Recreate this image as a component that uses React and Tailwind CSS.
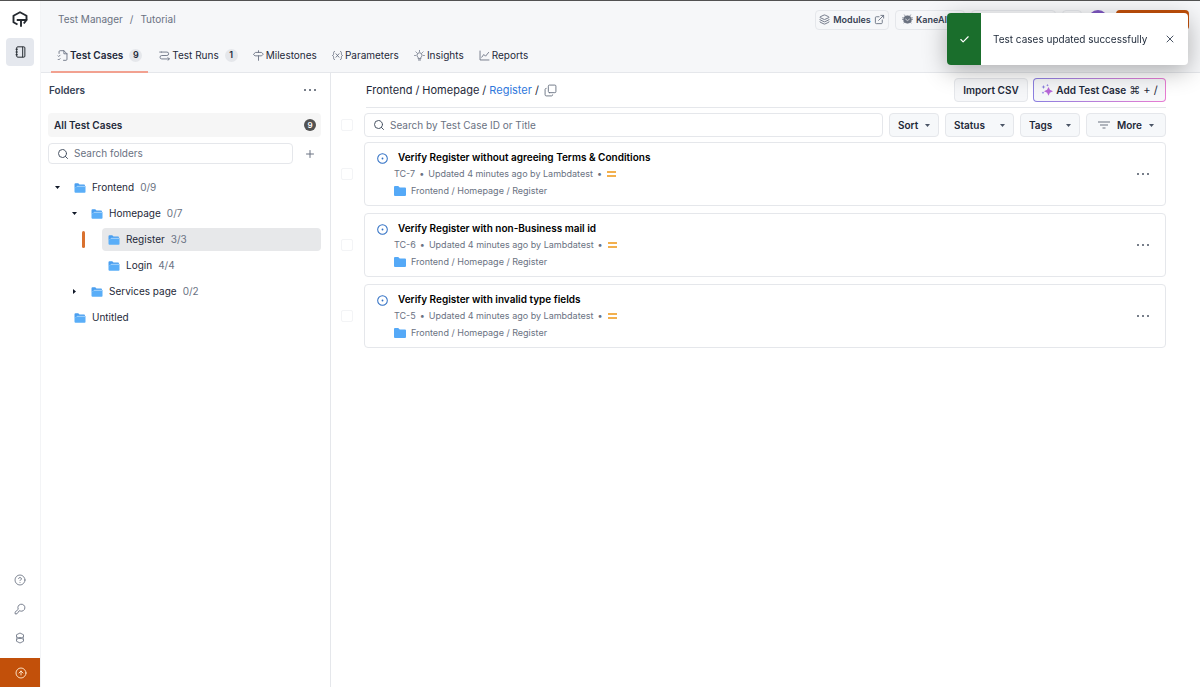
import React, { useState } from "react";
import { Search, Plus, X, Check, Copy, Layers, ExternalLink, CircleHelp, CircleArrowUp } from "lucide-react";

const tabs = [
    { name: "Test Cases", icon: "cases", count: 9 },
    { name: "Test Runs", icon: "runs", count: 1 },
    { name: "Milestones", icon: "milestones" },
    { name: "Parameters", icon: "parameters" },
    { name: "Insights", icon: "insights" },
    { name: "Reports", icon: "reports" },
];

const testCases = [
    { id: "TC-7", title: "Verify Register without agreeing Terms & Conditions" },
    { id: "TC-6", title: "Verify Register with non-Business mail id" },
    { id: "TC-5", title: "Verify Register with invalid type fields" },
];

const TabIcon = ({ name }) => (
    <svg
        viewBox="0 0 16 16"
        className="w-[11px] h-[11px] shrink-0 text-gray-500"
        fill="none"
        stroke="currentColor"
        strokeWidth="1.3"
        strokeLinecap="round"
        strokeLinejoin="round"
    >
        {name === "cases" && (
            <path d="M3 5V2.5A1.5 1.5 0 0 1 4.5 1H10l4.5 4.500V13.5A1.5 1.5 0 0 1 13 15H9.500M10 1v4.500h4.500M1.500 8.500l1 1 2-2M1.500 13.500l1 1 2-2" />
        )}
        {name === "runs" && (
            <path d="M3.500 3h8a2.500 2.500 0 0 1 0 5H4a2.500 2.500 0 0 0 0 5h11M1 3h2.500M13 11l2 2-2 2" />
        )}
        {name === "milestones" && (
            <path d="M8 1v2.500M8 8.500V15M1 6l2.500-2.500h9L15 6l-2.500 2.500h-9z" />
        )}
        {name === "parameters" && (
            <path d="M3.500 2C1.800 2 2.500 5 2.200 6.500 2 7.500 1 8 .8 8c.2 0 1.200.5 1.400 1.500C2.500 11 1.800 14 3.500 14M12.500 2c1.700 0 1 3 1.300 4.500.2 1 1.200 1.500 1.400 1.500-.2 0-1.200.5-1.400 1.500-.3 1.500.4 4.500-1.300 4.500M5.800 5.500l4.400 5M10.200 5.500l-4.400 5" />
        )}
        {name === "insights" && (
            <path d="M6 12v-1.500C4.800 9.800 4.300 8.800 4.300 7.700a3.700 3.700 0 0 1 7.400 0c0 1.100-.5 2.100-1.700 2.800V12zM6.500 14.500h3M8 .8v1.200M1 8h1M14 8h1M2.800 2.800l.8.8M13.200 2.800l-.8.8" />
        )}
        {name === "reports" && <path d="M1.500 1.500v13h13M4 10.500l3-4 2.500 2.500 4.500-5.500" />}
    </svg>
);

const OpenFolder = () => (
    <svg viewBox="0 0 24 20" className="w-3 h-[10px] shrink-0">
        <path d="M1 2.500A2 2 0 0 1 3 .5h5.500l2.500 2.500h9a2 2 0 0 1 2 2V7H5L3 9H1z" fill="#4a9ff0" />
        <path d="M4.500 6.200H23V18a1.600 1.600 0 0 1-1.600 1.600H3A2.200 2.200 0 0 1 1 17.500V8.500h3.500z" fill="#5aaef8" />
        <path d="M6 6.600h16" stroke="#fff" strokeWidth="1" />
    </svg>
);

const Caret = ({ className = "" }) => (
    <svg viewBox="0 0 10 6" className={`w-[5px] h-[3px] shrink-0 ${className}`}>
        <path d="M0 0h10L5 6z" fill="currentColor" />
    </svg>
);

const Dots = () => (
    <svg viewBox="0 0 12 2" className="w-3 h-[2px]" fill="#4b5563">
        <circle cx="1" cy="1" r="1" />
        <circle cx="6" cy="1" r="1" />
        <circle cx="11" cy="1" r="1" />
    </svg>
);

const Sidebar = () => (
    <aside className="w-[41px] shrink-0 border-r border-gray-100 bg-white flex flex-col items-center justify-between">
        <div className="w-10 flex flex-col items-center pt-[6px] gap-[7px]">
            <a href="#home" aria-label="Home" className="p-1">
                <svg
                    viewBox="0 0 32 32"
                    className="w-4 h-4"
                    fill="none"
                    stroke="#24292f"
                    strokeWidth="3.800"
                    strokeLinejoin="round"
                >
                    <path d="M11 27L3 22.500V9.500L16 2.500l13 7v9" />
                    <path d="M9.500 18H29l-5.500 7M18 18v13.500" />
                </svg>
            </a>
            <a
                href="#test-manager"
                aria-label="Test Manager"
                className="w-7 h-7 rounded bg-[#e5e8ee] flex items-center justify-center"
            >
                <svg viewBox="0 0 20 22" className="w-[11px] h-3" fill="none" stroke="#24292f" strokeWidth="1.800">
                    <rect x="3" y="1.500" width="15" height="19" rx="2" />
                    <path d="M14 1.500v19M1 6h4M1 11h4M1 16h4" />
                </svg>
            </a>
        </div>
        <div className="w-10 flex flex-col items-center text-gray-500">
            <div className="flex flex-col items-center gap-[17px] pb-[14px]">
                <button aria-label="Help">
                    <CircleHelp size={12} strokeWidth={1.7} />
                </button>
                <button aria-label="Access key">
                    <svg viewBox="0 0 24 24" className="w-3 h-3" fill="none" stroke="currentColor" strokeWidth="1.800">
                        <path d="M8.500 12.500A7 7 0 1 1 12.500 16L10.500 15.500 6 21.500l-3.500.5-.5-3.500z" />
                    </svg>
                </button>
                <button aria-label="Settings">
                    <svg viewBox="0 0 24 24" className="w-3 h-3" fill="none" stroke="currentColor" strokeWidth="1.700">
                        <path d="M12 2l7 3.500v5L17.500 12l1.500 1.500v5L12 22l-7-3.500v-5L6.500 12 5 10.500v-5z" />
                        <path d="M6 10l6 3.500 6-3.500M6 14.500l6-4 6 4" />
                    </svg>
                </button>
            </div>
            <button aria-label="Upgrade" className="w-10 h-[29px] pl-[2px] bg-[#c2500a] text-orange-100 flex items-center justify-center">
                <CircleArrowUp size={12} strokeWidth={1.8} />
            </button>
        </div>
    </aside>
);

const Header = () => (
    <header className="bg-[#f6f7f9] border-b border-gray-200">
        <div className="h-[37px] pl-[17px] pr-[11px] flex items-center justify-between">
            <nav className="flex gap-[7px] text-[10px] text-gray-500">
                <a href="#manager">Test Manager</a>
                <span>/</span>
                <a href="#tutorial">Tutorial</a>
            </nav>
            <div className="flex items-center text-[9px] font-semibold text-gray-700">
                <button className="h-5 w-[74px] mr-[6px] border border-gray-200 rounded flex items-center justify-center gap-[3px]">
                    <Layers size={11} className="text-gray-500" />
                    Modules
                    <ExternalLink size={11} className="text-gray-500" />
                </button>
                <button className="h-5 w-[70px] mr-[6px] pl-[6px] border border-gray-200 rounded flex items-center gap-[3px]">
                    <svg viewBox="0 0 20 20" className="w-[11px] h-[11px]" fill="none" stroke="#6b7280">
                        <circle cx="10" cy="10" r="7" fill="#6b7280" />
                        <path d="M0 7h20M0 10h20M2 13h16M4 1l4 6M16 1l-4 6M3 17l3-4M17 17l-3-4" strokeWidth="1.200" />
                        <path d="M6 9l4 3 4-3" stroke="#e5e7eb" strokeWidth="1.500" />
                    </svg>
                    KaneAI
                </button>
                <button aria-label="Search workspace" className="h-5 w-[85px] mr-[6px] border border-gray-200 rounded" />
                <button aria-label="Notifications" className="h-5 w-5 mr-[6px] border border-gray-200 rounded" />
                <button aria-label="Account" className="h-5 w-5 mr-2 rounded-full bg-[#7e57c2]" />
                <button aria-label="Upgrade now" className="h-5 w-[73px] rounded bg-[#c2500a]" />
            </div>
        </div>
        <nav className="flex pl-[10px] gap-[7px] text-[10px] text-gray-800">
            {tabs.map((tab, i) => (
                <a
                    key={tab.name}
                    href={`#${tab.icon}`}
                    className={
                        i === 0
                            ? "h-[35px] px-[6px] pt-px -mb-px flex items-center gap-[2px] font-semibold border-b-2 border-[#f2a190]"
                            : "h-[34px] px-1 flex items-center gap-[2px]"
                    }
                >
                    <TabIcon name={tab.icon} />
                    {tab.name}
                    {tab.count && (
                        <span className="ml-1 w-[13px] h-[13px] rounded-full bg-gray-200 text-[9px] font-semibold flex items-center justify-center">
                            {tab.count}
                        </span>
                    )}
                </a>
            ))}
        </nav>
    </header>
);

const Folder = ({ name, count, open, closed, selected, indent }) => (
    <li className={`flex items-center h-[23px] ${indent}`}>
        {selected && <span className="w-[3px] h-[17px] -ml-5 mr-[17px] rounded-full bg-[#d9712f]" />}
        {!selected && (
            <span className="w-[13px] -ml-[13px] flex items-center text-gray-900">
                {open && <Caret />}
                {closed && <Caret className="-rotate-90" />}
            </span>
        )}
        <a
            href={`#${name}`}
            className={`h-full flex-1 flex items-center gap-[6px] pl-[6px] rounded ${selected ? "bg-[#e7e8ea]" : ""}`}
        >
            <OpenFolder />
            <span className="text-gray-800">{name}</span>
            <span className="text-gray-500">{count}</span>
        </a>
    </li>
);

const FolderPanel = () => (
    <section className="w-[290px] shrink-0 border-r border-gray-200 pl-[7px] pr-[9px] text-[10px]">
        <div className="h-[34px] px-px flex items-center justify-between">
            <h2 className="font-semibold text-gray-700">Folders</h2>
            <button aria-label="Folder options" className="p-1">
                <Dots />
            </button>
        </div>
        <a
            href="#all"
            className="mt-[6px] h-6 pl-[6px] pr-[5px] rounded bg-[#f6f6f6] flex items-center justify-between font-semibold text-gray-800"
        >
            All Test Cases
            <span className="w-3 h-3 rounded-full bg-neutral-600 text-white text-[8px] flex items-center justify-center">9</span>
        </a>
        <div className="mt-[6px] flex items-center gap-[11px]">
            <label className="h-[21px] flex-1 px-2 border border-gray-200 rounded flex items-center gap-[5px]">
                <Search size={12} className="shrink-0 text-gray-600" />
                <input
                    type="text"
                    aria-label="Search folders"
                    placeholder="Search folders"
                    className="w-full outline-none placeholder:text-gray-500"
                />
            </label>
            <button aria-label="Add folder" className="w-[17px] text-gray-500">
                <Plus size={12} />
            </button>
        </div>
        <ul className="mt-3 flex flex-col gap-[3px]">
            <Folder name="Frontend" count="0/9" open indent="pl-5" />
            <Folder name="Homepage" count="0/7" open indent="pl-[37px]" />
            <Folder name="Register" count="3/3" selected indent="pl-[54px]" />
            <Folder name="Login" count="4/4" indent="pl-[54px]" />
            <Folder name="Services page" count="0/2" closed indent="pl-[37px]" />
            <Folder name="Untitled" indent="pl-5" />
        </ul>
    </section>
);

const Filter = ({ label, width }) => (
    <div className={`relative h-6 ${width}`}>
        <select
            aria-label={label}
            className="w-full h-full pl-2 appearance-none border border-gray-200 rounded bg-[#f6f8fa] font-semibold text-gray-800"
        >
            <option>{label}</option>
        </select>
        <Caret className="absolute right-[9px] top-[11px] text-gray-600 pointer-events-none" />
    </div>
);

const SelectBox = ({ label }) => (
    <input
        type="checkbox"
        aria-label={label}
        className="appearance-none w-3 h-3 shrink-0 border border-gray-100 rounded-xs bg-white checked:bg-blue-600"
    />
);

const TestCase = ({ id, title }) => (
    <li className="flex items-center gap-[11px]">
        <SelectBox label={`Select ${id}`} />
        <article className="flex-1 h-16 px-3 border border-gray-200 rounded flex items-center justify-between">
            <div className="flex gap-[10px]">
                <svg viewBox="0 0 24 24" className="w-[11px] h-[11px] mt-1" fill="none" stroke="#2f6fc4">
                    <circle cx="12" cy="12" r="10.500" strokeWidth="2.200" />
                    <circle cx="12" cy="12" r="2" fill="#2f6fc4" stroke="none" />
                </svg>
                <div>
                    <h3 className="text-[10px] leading-4 font-semibold text-black">{title}</h3>
                    <p className="-ml-1 mt-px text-[9px] leading-4 text-gray-500 flex items-center gap-1">
                        <span>{id}</span>
                        <span>•</span>
                        <span>Updated 4 minutes ago by Lambdatest</span>
                        <span>•</span>
                        <span className="ml-px w-[9px] h-[6px] border-y-2 border-[#f2b04e]" />
                    </p>
                    <p className="-ml-1 mt-px text-[9px] leading-4 text-gray-500 flex items-center gap-[5px]">
                        <svg viewBox="0 0 24 20" className="w-3 h-[10px]" fill="#55a9f7">
                            <path d="M0 2A2 2 0 0 1 2 0h6.500l3 3H22a2 2 0 0 1 2 2v13a2 2 0 0 1-2 2H2a2 2 0 0 1-2-2z" />
                        </svg>
                        Frontend / Homepage / Register
                    </p>
                </div>
            </div>
            <button aria-label={`${id} options`} className="p-1">
                <Dots />
            </button>
        </article>
    </li>
);

const Toast = ({ onClose }) => (
    <div role="status" className="fixed top-[13px] right-3 w-[241px] h-[52px] rounded bg-white shadow-[0_6px_24px_rgba(0,0,0,0.3)] flex items-center overflow-hidden">
        <div className="w-[34px] h-full bg-[#1a6e2c] text-white flex items-center justify-center">
            <Check size={11} strokeWidth={2.5} />
        </div>
        <p className="flex-1 pl-3 text-[10px] text-gray-800">Test cases updated successfully</p>
        <button aria-label="Close" onClick={onClose} className="mr-3 text-gray-600">
            <X size={12} />
        </button>
    </div>
);

export default function App() {
    const [showToast, setShowToast] = useState(true);

    return (
        <div className="min-h-screen flex border-t border-neutral-600 bg-white font-['Inter',sans-serif]">
            <Sidebar />
            <div className="flex-1 flex flex-col">
                <Header />
                <div className="flex-1 flex">
                    <FolderPanel />
                    <main className="flex-1 pl-[10px] pr-[34px] text-[10px]">
                        <div className="ml-[25px] h-[35px] border-b border-gray-200 flex items-center justify-between">
                            <nav className="flex items-center gap-[3px] text-[11px] text-gray-800">
                                <a href="#frontend">Frontend</a>
                                <span>/</span>
                                <a href="#homepage">Homepage</a>
                                <span>/</span>
                                <a href="#register" className="text-[#2f78dc]">Register</a>
                                <span>/</span>
                                <button aria-label="Copy path" className="ml-[2px] text-gray-500">
                                    <Copy size={13} strokeWidth={1.7} className="-scale-y-100" />
                                </button>
                            </nav>
                            <div className="flex gap-[5px] font-semibold text-gray-800">
                                <button className="h-6 w-[74px] border border-gray-200 rounded bg-[#f6f7f9]">Import CSV</button>
                                <button className="h-6 w-[133px] rounded p-px bg-linear-to-r from-[#8b7fe0] to-[#e77bd2]">
                                    <span className="h-full rounded-[3px] bg-[#f6f7f9] flex items-center justify-center gap-[3px]">
                                        <svg viewBox="0 0 24 24" className="w-3 h-3" fill="#b866d8">
                                            <path d="M15 6l2.800 5.700L24 14.500l-6.200 2.800L15 23.500l-2.800-6.200L6 14.500l6.200-2.800z" />
                                            <path d="M5 2l1.200 2.800L9 6 6.200 7.200 5 10 3.800 7.200 1 6l2.800-1.200zM4 15l.8 1.700 1.700.8-1.700.8L4 20l-.8-1.700-1.700-.8 1.700-.8zM13 0l.8 1.700 1.700.8-1.700.8L13 5l-.8-1.700-1.700-.8 1.700-.8z" fill="#8b7fe0" />
                                        </svg>
                                        Add Test Case
                                        <span className="text-[11px] font-normal">⌘ + /</span>
                                    </span>
                                </button>
                            </div>
                        </div>
                        <div className="mt-[5px] flex items-center gap-[11px]">
                            <SelectBox label="Select all" />
                            <div className="flex-1 flex gap-[6px]">
                                <label className="flex-1 h-6 px-2 border border-gray-200 rounded flex items-center gap-[5px]">
                                    <Search size={12} className="shrink-0 text-gray-600" />
                                    <input
                                        type="text"
                                        aria-label="Search test cases"
                                        placeholder="Search by Test Case ID or Title"
                                        className="w-full outline-none placeholder:text-gray-500"
                                    />
                                </label>
                                <Filter label="Sort" width="w-[50px]" />
                                <Filter label="Status" width="w-[69px]" />
                                <Filter label="Tags" width="w-[60px]" />
                                <button className="h-6 w-20 px-[11px] border border-gray-200 rounded bg-[#f6f8fa] font-semibold text-gray-800 flex items-center justify-between">
                                    <svg viewBox="0 0 12 8" className="w-3 h-2" fill="none" stroke="#6b7280">
                                        <path d="M0 1h12M2 4h8M4.500 7h3" />
                                    </svg>
                                    More
                                    <Caret className="text-gray-600" />
                                </button>
                            </div>
                        </div>
                        <ul className="mt-[5px] flex flex-col gap-[7px]">
                            {testCases.map((testCase) => (
                                <TestCase key={testCase.id} {...testCase} />
                            ))}
                        </ul>
                    </main>
                </div>
            </div>
            {showToast && <Toast onClose={() => setShowToast(false)} />}
        </div>
    );
}
